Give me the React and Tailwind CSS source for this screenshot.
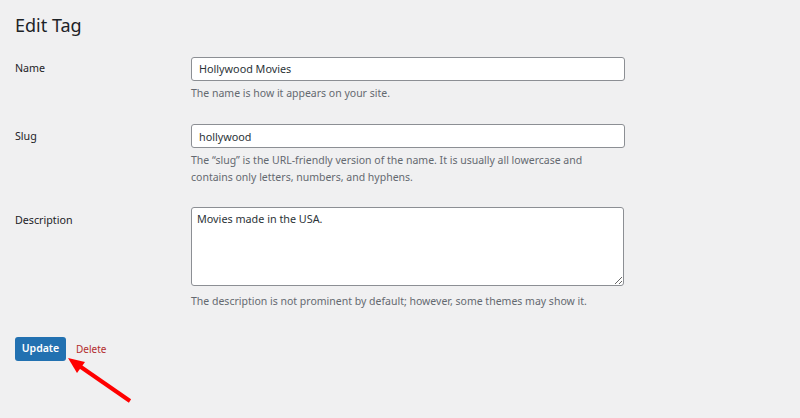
export default function App() {
  const rows = [
    {
      label: "Name",
      field: (
        <input
          defaultValue="Hollywood Movies"
          className="w-[434px] h-[24px] px-[7px] bg-white border border-[#8c8f94] rounded-[3px] text-[10.8px] text-[#2c3338] outline-none"
        />
      ),
      help: ["The name is how it appears on your site."],
      helpGap: "mt-[4px]",
      gap: "mb-[21px]",
    },
    {
      label: "Slug",
      field: (
        <input
          defaultValue="hollywood"
          className="w-[434px] h-[24px] px-[7px] bg-white border border-[#8c8f94] rounded-[3px] text-[10.8px] text-[#2c3338] outline-none"
        />
      ),
      help: [
        "The \u201cslug\u201d is the URL-friendly version of the name. It is usually all lowercase and",
        "contains only letters, numbers, and hyphens.",
      ],
      helpGap: "mt-[4px]",
      gap: "mb-[21px]",
    },
    {
      label: "Description",
      field: (
        <textarea
          defaultValue="Movies made in the USA."
          className="block w-[433px] h-[79px] px-[5px] py-[2px] bg-white border border-[#8c8f94] rounded-[3px] text-[10.8px] leading-[17px] text-[#2c3338] outline-none"
        />
      ),
      help: ["The description is not prominent by default; however, some themes may show it."],
      helpGap: "mt-[7px]",
      gap: "mb-[27px]",
    },
  ];

  return (
    <div
      className="relative w-[800px] h-[418px] bg-[#f0f0f1] px-[15px] pt-[12px] overflow-hidden"
      style={{ fontFamily: '"Noto Sans", "Open Sans", sans-serif' }}
    >
      <h1 className="text-[18px] leading-[27px] font-normal text-[#1d2327]">Edit Tag</h1>

      <div className="mt-[16px]">
        {rows.map((row) => (
          <div key={row.label} className={`flex ${row.gap}`}>
            <div className="w-[176px] pt-[5px] text-[10.7px] leading-[17px] text-[#1d2327]">{row.label}</div>
            <div>
              {row.field}
              <div className={`${row.helpGap} text-[10.5px] leading-[17px] text-[#646970]`}>
                {row.help.map((line) => (
                  <p key={line}>{line}</p>
                ))}
              </div>
            </div>
          </div>
        ))}
      </div>

      <div className="flex items-center gap-[10px]">
        <button className="w-[51px] h-[24px] bg-[#2271b1] rounded-[3px] text-white text-[10.5px] font-semibold">
          Update
        </button>
        <span className="text-[10px] text-[#b32d2e]">Delete</span>
      </div>

      {/* red annotation arrow */}
      <svg className="absolute left-0 top-0" width="800" height="418">
        <line x1="130" y1="401" x2="78" y2="365" stroke="#ff0000" strokeWidth="4" />
        <polygon points="68,358 85,362 77,373" fill="#ff0000" />
      </svg>
    </div>
  );
}
